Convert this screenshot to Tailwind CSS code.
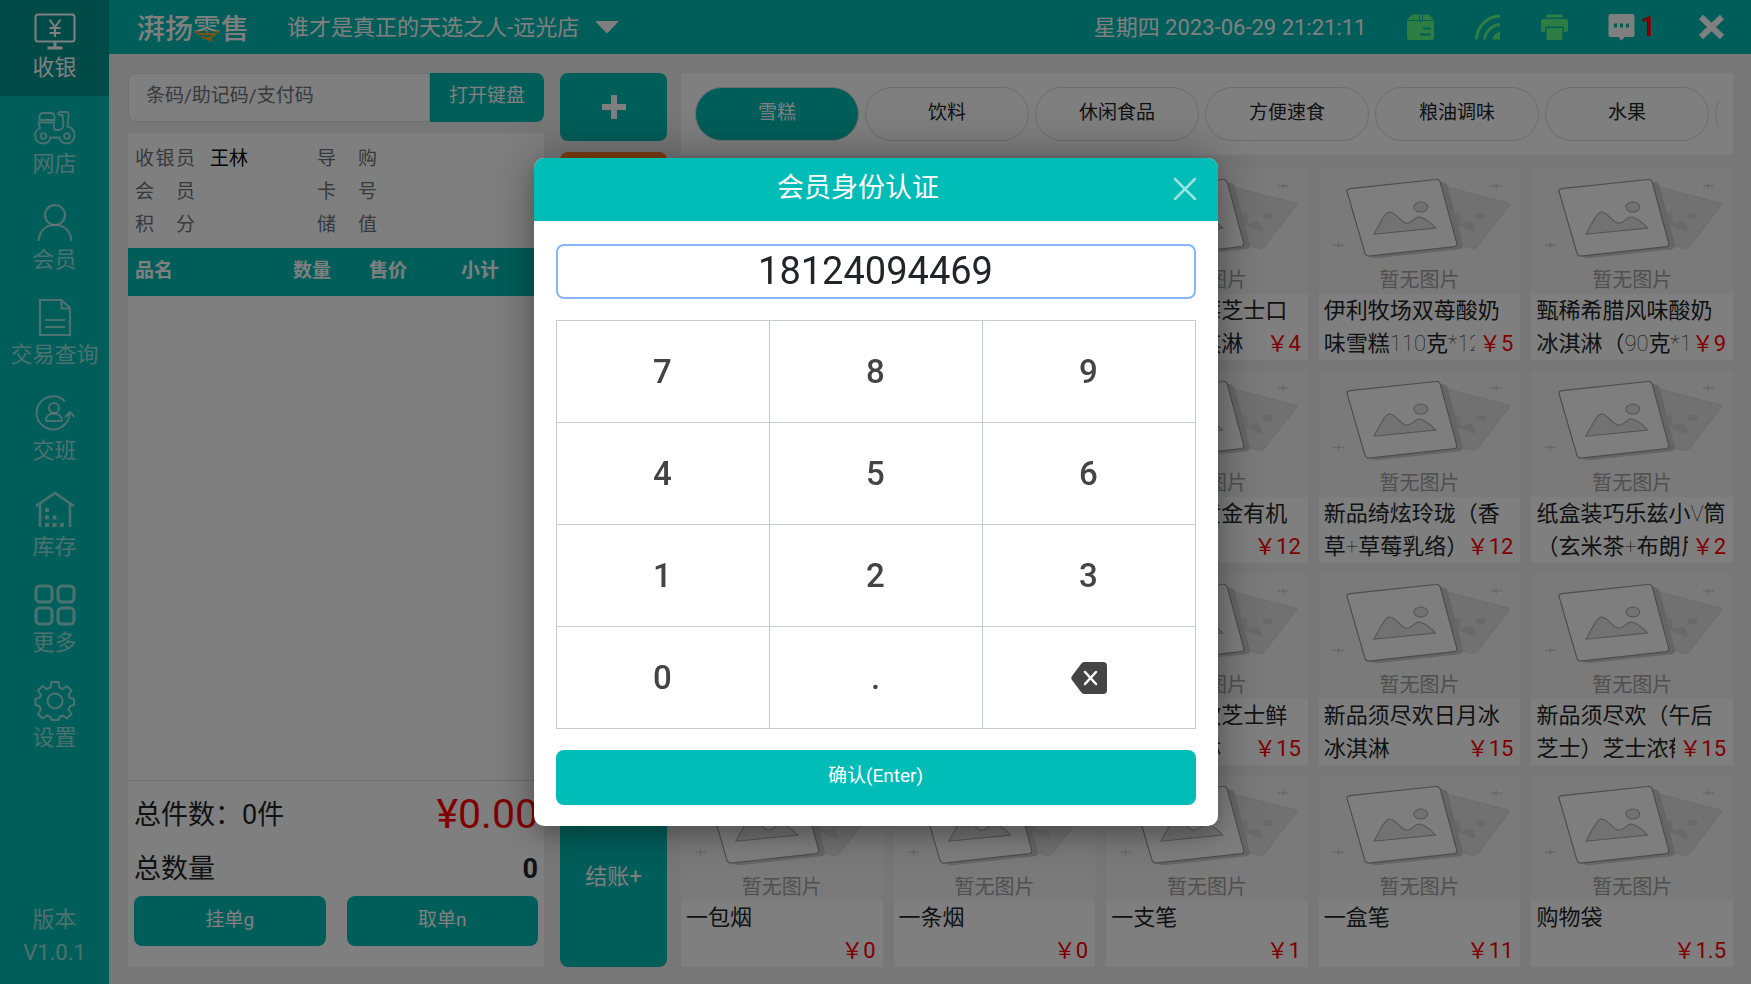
<!DOCTYPE html>
<html lang="zh-CN">
<head>
  <meta charset="UTF-8" />
  <meta name="viewport" content="width=device-width, initial-scale=1.0" />
  <title>湃扬零售 - 收银</title>
  <script src="https://cdn.jsdelivr.net/npm/@tailwindcss/browser@4"></script>
</head>

<body class="h-screen overflow-hidden bg-[#eee] font-['Roboto','Noto_Sans_CJK_SC',sans-serif] text-[#212529]">

  <!-- shared drawing for products without a photo -->
  <svg class="hidden">
    <symbol id="no-image" viewBox="0 0 202 125" preserveAspectRatio="none">
      <path d="M128 18 L190 34 Q192 35 190 37 L159 77 Q156 80 153 79 L130 73 Z" fill="#e2e2e2" stroke="#dadada" />
      <path d="M135 46 Q139 41 142 46 Q140 53 144 55 Q152 49 156 57 L157 63 L136 55 Z" fill="#d3d3d3" />
      <ellipse cx="162" cy="47" rx="5" ry="3" fill="#d3d3d3" />
      <path d="M121 13.500 Q127 12.500 129 17 L144 75 Q145 79 141 80 L58 89 Q53 89 52 86 L110 70 Z" fill="#cbcbcb" />
      <path d="M31 19.500 L117 10.500 Q120 10 121.500 13 L138 74 Q138.500 77 136 77.500 L50 87 Q47 87 46 84 L28 22 Q28 20 31 19.500 Z" fill="#fcfcfc" stroke="#999" stroke-width="1.200" />
      <path d="M55 65 C62 53 66 43 71 43 C77 43 83 55 88 54 C93 54 96 48 100 48 C105 48 112 54 117 59 Z" fill="#e4e4e4" stroke="#a6a6a6" />
      <ellipse cx="102" cy="38" rx="7" ry="5" fill="#e4e4e4" stroke="#a6a6a6" />
      <path d="M14 76h11M19.500 73v6M172 17h11M177.500 14v6" stroke="#c4c4c4" />
    </symbol>
  </svg>

  <div class="flex h-full">
    <!-- Sidebar -->
    <div class="flex w-[109px] shrink-0 flex-col bg-[#00bcb4] text-[22px] leading-[33px] text-white/60">
      <nav class="grid h-[766px] grid-rows-8">
        <a href="#" class="flex flex-col items-center bg-[#009690] pt-[9px] text-white">
          <svg class="h-[42px] w-[42px]" viewBox="0 0 42 42" fill="none" stroke="currentColor" stroke-width="2">
            <rect x="1.500" y="5.500" width="39" height="27" rx="2.500" />
            <path d="M21 33v5M13.500 39h15" stroke-width="3" />
            <path d="M15.500 10.500l5.500 7.500 5.500-7.500M21 17v11M15.500 19h11M15.500 24h11" />
          </svg>
          <span>收银</span>
        </a>
        <a href="#" class="flex flex-col items-center pt-[9px]">
          <svg class="h-[42px] w-[42px]" viewBox="0 0 42 42" fill="none" stroke="currentColor" stroke-width="1.800">
            <path d="M5.500 15v-3q0-4 4-4h7q4 0 4 4v3zM4.500 17.500h15.500v2q-1.500 6 4 5.500 6 0 5.500-7l-1-8h-2.500q-1.500 0-1.500-1.500t1.500-1.500h6.500q2.500 0 2 3.500l-1 11q7 1.500 7 9c0 5-3.500 8-7.500 8-4 0-6.500-2-7.500-6h-9c-1 4-4 6-7.500 6-4.500 0-8-3-8-8 0-3.500 2-6 5-7.500z" />
            <circle cx="9.500" cy="31" r="2.800" /><circle cx="33" cy="31" r="2.800" />
          </svg>
          <span>网店</span>
        </a>
        <a href="#" class="flex flex-col items-center pt-[9px]">
          <svg class="h-[42px] w-[42px]" viewBox="0 0 42 42" fill="none" stroke="currentColor" stroke-width="2.200">
            <circle cx="21" cy="14" r="10" />
            <path d="M4.500 40c1-10 7-16 16.500-16s15.500 6 16.500 16" />
          </svg>
          <span>会员</span>
        </a>
        <a href="#" class="flex flex-col items-center pt-[9px]">
          <svg class="h-[42px] w-[42px]" viewBox="0 0 42 42" fill="none" stroke="currentColor" stroke-width="2.200">
            <path d="M6 4h21.500l8.500 8v27H6zM27.500 4v8.500H36M11 24h20M11 31h20" />
          </svg>
          <span>交易查询</span>
        </a>
        <a href="#" class="flex flex-col items-center pt-[9px]">
          <svg class="h-[42px] w-[42px]" viewBox="0 0 42 42" fill="none" stroke="currentColor" stroke-width="2">
            <path d="M31 9.500A16.500 16.500 0 1 0 35.500 22M31 25l5-5 4.500 5" />
            <circle cx="20" cy="16" r="5" />
            <path d="M12 28c0-4 4-6.500 8-6.500s8 2.500 8 6.500q0 1-2 1H14q-2 0-2-1z" />
          </svg>
          <span>交班</span>
        </a>
        <a href="#" class="flex flex-col items-center pt-[9px]">
          <svg class="h-[42px] w-[42px]" viewBox="0 0 42 42" fill="none" stroke="currentColor" stroke-width="2.500">
            <path d="M2 18L21 5l19 13M6 16v23M36 16v23" />
            <path d="M11 22h4M11 29.500h4M18.500 29.500h4M11 37h4M18.500 37h4M26 37h4" stroke-width="4" />
          </svg>
          <span>库存</span>
        </a>
        <a href="#" class="flex flex-col items-center pt-[9px]">
          <svg class="h-[42px] w-[42px]" viewBox="0 0 42 42" fill="none" stroke="currentColor" stroke-width="3">
            <rect x="2" y="2" width="16" height="16" rx="4" /><rect x="24" y="2" width="16" height="16" rx="4" />
            <rect x="2" y="24" width="16" height="16" rx="4" /><rect x="24" y="24" width="16" height="16" rx="4" />
          </svg>
          <span>更多</span>
        </a>
        <a href="#" class="flex flex-col items-center pt-[9px]">
          <svg class="h-[42px] w-[42px]" viewBox="0 0 42 42" fill="none" stroke="currentColor" stroke-width="2">
            <path d="M17.500 3h7l1 5.500 3 1.500 4.500-3 4.500 4.500-3 4.500 1.500 3 4 1v6l-4 1-1.500 3.500 3 4.500-4.500 4.500-4.500-3-3 1.500-1 3h-7l-1-3-3.500-1.500-4.500 3L4 35l3-4.500L5.500 27l-4-1v-6l4-1L7 16l-3-4.500L8.500 7l4.500 3 3.500-1.500z" />
            <circle cx="21" cy="22" r="7.500" />
          </svg>
          <span>设置</span>
        </a>
      </nav>
      <div class="mt-auto pb-[15px] text-center">版本<br />V1.0.1</div>
    </div>

    <div class="flex min-w-0 flex-1 flex-col">
      <!-- Top bar -->
      <header class="flex h-[54px] shrink-0 items-center bg-[#00bcb4] pr-[26px] pl-7 text-[22px] text-white">
        <h1 class="font-['Noto_Sans_CJK_SC',sans-serif] text-[28px] leading-8 font-medium">湃扬<span class="bg-linear-to-b from-white from-60% to-[#ffa51e] to-60% bg-clip-text text-transparent">零</span>售</h1>
        <button class="ml-[38px] flex items-center gap-4">谁才是真正的天选之人-远光店
          <svg class="h-3 w-6" viewBox="0 0 24 12" fill="currentColor"><path d="M1 0h22q1 0 0 1L13 11.500q-1 1-2 0L1 1Q0 0 1 0z" /></svg>
        </button>
        <time class="ml-auto">星期四 2023-06-29 21:21:11</time>
        <svg class="ml-10 h-7 w-[27px] text-[#5cfa84]" viewBox="0 0 27 28" fill="currentColor">
          <path d="M6 1.500h6V7H0L3.500 3Q4.500 1.500 6 1.500zM13 1.500h2V7h-2zM16 1.500h5q1.500 0 2.500 1.500L27 7H16zM0 8h12.500v1h2.500V8h12v16.500q0 2.500-2.500 2.500h-22Q0 27 0 24.500z" />
          <path d="M17 15.500h6M13.500 21.500H23" stroke="#00bcb4" stroke-width="2" stroke-linecap="round" />
        </svg>
        <svg class="ml-10 h-7 w-[27px] text-[#5cfa84]" viewBox="0 0 27 28" fill="none" stroke="currentColor" stroke-width="3">
          <path d="M2.500 26.500A24 24 0 0 1 26 3M10.500 26.500A17 17 0 0 1 26 11.500" /><path d="M18 26.500q1.500-6 8-8v8z" fill="currentColor" stroke="none" />
        </svg>
        <svg class="ml-10 h-7 w-[27px] text-[#5cfa84]" viewBox="0 0 27 28" fill="currentColor">
          <path d="M7 1.500h13q2 0 2 3H5q0-3 2-3zM2 6h23q2 0 2 2v9q0 2-2 2h-2v-4q0-1.500-1.500-1.500h-16Q4 13.500 4 15v4H2q-2 0-2-2V8q0-2 2-2zM5.500 15h16v10q0 2-2 2h-12q-2 0-2-2z" />
        </svg>
        <div class="ml-10 flex items-center gap-1.5">
          <svg class="h-7 w-[27px]" viewBox="0 0 27 28" fill="currentColor"><path d="M3 1h21q2.500 0 2.500 2.500v18q0 2.500-2.500 2.500h-7.500l-3 3.500-3-3.500H3Q.5 24 .5 21.500v-18Q.5 1 3 1z" /><path d="M6 12.500h3M12 12.500h3M18 12.500h3" stroke="#00bcb4" stroke-width="4" /></svg>
          <span class="text-[27px] font-bold text-[#f00]">1</span>
        </div>
        <button aria-label="退出" class="ml-[42px]">
          <svg class="h-7 w-[27px]" viewBox="0 0 27 28" stroke="currentColor" stroke-width="6"><path d="M3 4l21 20M24 4L3 24" /></svg>
        </button>
      </header>

      <main class="flex min-h-0 flex-1 pt-[19px] pr-[18px] pb-[17px] pl-[19px]">
        <!-- Order -->
        <section class="mr-4 flex w-[416px] shrink-0 flex-col gap-[11px]">
          <div class="flex h-[49px] shrink-0 text-[19px]">
            <input type="text" aria-label="条码/助记码/支付码" placeholder="条码/助记码/支付码" class="min-w-0 flex-1 rounded-l-lg border border-[#dee2e6] bg-white px-[17px] pb-0.5 placeholder:text-[#6c757d]" />
            <button class="w-[114px] rounded-r-lg bg-[#00bcb4] pb-0.5 text-white">打开键盘</button>
          </div>
          <div class="flex min-h-0 flex-1 flex-col bg-white">
            <dl class="grid grid-cols-[60px_92px_60px_1fr] gap-x-[15px] px-[7px] pt-[9px] pb-[7px] text-[19px] leading-[33px] text-[#6c757d]">
              <dt class="flex justify-between"><span>收</span><span>银</span><span>员</span></dt><dd class="text-black">王林</dd>
              <dt class="flex justify-between"><span>导</span><span>购</span></dt><dd></dd>
              <dt class="flex justify-between"><span>会</span><span>员</span></dt><dd></dd>
              <dt class="flex justify-between"><span>卡</span><span>号</span></dt><dd></dd>
              <dt class="flex justify-between"><span>积</span><span>分</span></dt><dd></dd>
              <dt class="flex justify-between"><span>储</span><span>值</span></dt><dd></dd>
            </dl>
            <table class="w-full table-fixed bg-[#00bcb4] text-[19px] text-white">
              <thead>
                <tr class="h-12">
                  <th class="w-[146px] pb-0.5 pl-[7px] text-left">品名</th>
                  <th class="w-[76px] pb-0.5">数量</th>
                  <th class="w-[76px] pb-0.5">售价</th>
                  <th class="w-[108px] pb-0.5">小计</th>
                  <th></th>
                </tr>
              </thead>
            </table>
            <div class="mt-auto border-t border-[#dcdcf0] px-1.5 pt-[7px] pb-[21px]">
              <div class="flex h-[54px] items-center justify-between text-[27px]">
                <span>总件数：0件</span>
                <span class="text-[41px] text-[#f00]">¥0.00</span>
              </div>
              <div class="flex h-[54px] items-center justify-between text-[27px]">
                <span>总数量</span>
                <span class="font-bold">0</span>
              </div>
              <div class="flex gap-[21px] text-[19px] text-white">
                <button class="h-[50px] flex-1 rounded-lg bg-[#00bcb4] pb-0.5">挂单g</button>
                <button class="h-[50px] flex-1 rounded-lg bg-[#00bcb4] pb-0.5">取单n</button>
              </div>
            </div>
          </div>
        </section>

        <!-- Actions -->
        <section class="mr-3.5 flex w-[107px] shrink-0 flex-col gap-[11px] text-[22px] text-white">
          <button aria-label="增加" class="flex h-[68px] items-center justify-center rounded-lg bg-[#00bcb4]">
            <svg class="h-6 w-6" viewBox="0 0 24 24" stroke="currentColor" stroke-width="6"><path d="M12 0v24M0 12h24" /></svg>
          </button>
          <button aria-label="减少" class="flex h-[68px] items-center justify-center rounded-lg bg-[#fd7e28]">
            <svg class="h-6 w-6" viewBox="0 0 24 24" stroke="currentColor" stroke-width="6"><path d="M0 12h24" /></svg>
          </button>
          <button class="mt-auto h-[182px] rounded-lg bg-[#00bcb4]">结账+</button>
        </section>

        <!-- Goods -->
        <section class="flex min-w-0 flex-1 flex-col gap-[14px]">
          <div class="h-[82px] shrink-0 bg-white px-[14px] py-[14px]">
            <div id="categories" class="flex gap-1.5 overflow-hidden text-[19px]"></div>
          </div>
          <div id="goods" class="grid min-h-0 flex-1 grid-cols-5 grid-rows-4 gap-[11px]"></div>
        </section>
      </main>
    </div>
  </div>

  <!-- Member dialog -->
  <div class="fixed inset-0 flex justify-center bg-black/50 pt-[158px]">
    <div role="dialog" aria-labelledby="dialog-title" class="w-[684px] self-start overflow-hidden rounded-[10px] bg-white shadow-[0_9px_18px_rgba(0,0,0,0.15),0_0_50px_rgba(0,0,0,0.35)]">
      <div class="flex h-[63px] items-center bg-[#00bcb6] pr-[21px] pl-2.5 text-white">
        <h2 id="dialog-title" class="flex-1 pb-0.5 text-center text-[27px]">会员身份认证</h2>
        <button aria-label="关闭" class="pb-0.5 text-white/60">
          <svg class="h-6 w-6" viewBox="0 0 24 24" stroke="currentColor" stroke-width="2.500" stroke-linecap="round"><path d="M2 2l20 20M22 2L2 22" /></svg>
        </button>
      </div>
      <form class="flex flex-col px-[22px] pt-[23px] pb-[21px]">
        <input type="text" aria-label="会员手机号" value="18124094469" class="h-[55px] w-full rounded-lg border-2 border-[#86b7fe] text-center text-[38px] outline-none" />
        <div id="keypad" class="mt-[21px] grid grid-cols-3 border-t border-l border-[#c6ccd3] text-[33px] font-medium text-[#444]"></div>
        <button type="submit" class="mt-[21px] h-[55px] rounded-lg bg-[#00bcb6] pb-0.5 text-[19px] text-white">确认(Enter)</button>
      </form>
    </div>
  </div>

  <script>
    const categories = ["雪糕", "饮料", "休闲食品", "方便速食", "粮油调味", "水果", ""];

    const goods = [
      { name: "", price: "" }, { name: "", price: "" },
      { name: "新品双拼莓芝士口味雪糕冰淇淋", price: "4" },
      { name: "伊利牧场双苺酸奶味雪糕110克*12支", price: "5" },
      { name: "甄稀希腊风味酸奶冰淇淋（90克*12", price: "9" },
      { name: "", price: "" }, { name: "", price: "" },
      { name: "伊利雪糕黄金有机", price: "12" },
      { name: "新品绮炫玲珑（香草+草莓乳络）", price: "12" },
      { name: "纸盒装巧乐兹小V筒（玄米茶+布朗尼", price: "2" },
      { name: "", price: "" }, { name: "", price: "" },
      { name: "新品须尽欢芝士鲜乳酪冰淇淋", price: "15" },
      { name: "新品须尽欢日月冰冰淇淋", price: "15" },
      { name: "新品须尽欢（午后芝士）芝士浓郁", price: "15" },
      { name: "一包烟", price: "0" },
      { name: "一条烟", price: "0" },
      { name: "一支笔", price: "1" },
      { name: "一盒笔", price: "11" },
      { name: "购物袋", price: "1.5" }
    ];

    const backspace = `<svg class="h-8 w-9" viewBox="0 0 36 32"><path d="M13 0h19q4 0 4 4v24q0 4-4 4H13q-1.500 0-3-2L1 18q-1.500-2 0-4L10 2q1.500-2 3-2z" fill="#444"/><path d="M14 10l11 12M25 10L14 22" stroke="#fff" stroke-width="2.500" stroke-linecap="round"/></svg>`;
    const keys = ["7", "8", "9", "4", "5", "6", "1", "2", "3", "0", ".", backspace];

    document.getElementById("categories").innerHTML = categories.map((c, i) => `
      <button class="h-[54px] w-[164px] shrink-0 rounded-full border border-[#d5d9dd] pb-0.5 ${i === 0 ? 'bg-[#00bcb4] text-white' : 'bg-white'}">${c}</button>
    `).join("");

    // latin characters in goods names use the hairline weight
    const thin = name => name.replace(/[0-9A-Za-z*+]+/g, s => `<span class="font-thin">${s}</span>`);

    document.getElementById("goods").innerHTML = goods.map(g => `
      <a href="#" class="relative flex min-w-0 flex-col bg-white">
        <div class="relative flex min-h-0 flex-1 items-end justify-center bg-[#f4f4f4] pb-1">
          <svg class="absolute inset-0 h-full w-full"><use href="#no-image" /></svg>
          <span class="relative text-[20px] leading-5 text-[#a0a0a0]">暂无图片</span>
        </div>
        <div class="h-[66px] shrink-0 overflow-hidden px-[5px] text-[22px] leading-[33px]">${thin(g.name)}</div>
        ${g.price ? `<span class="absolute right-0 bottom-0 bg-white pr-[7px] pl-1 text-[22px] leading-[33px] text-[#f00]">￥${g.price}</span>` : ''}
      </a>
    `).join("");

    document.getElementById("keypad").innerHTML = keys.map(k => `
      <button type="button" class="flex h-[102px] items-center justify-center border-r border-b border-[#c6ccd3]">${k}</button>
    `).join("");
  </script>
</body>
</html>
